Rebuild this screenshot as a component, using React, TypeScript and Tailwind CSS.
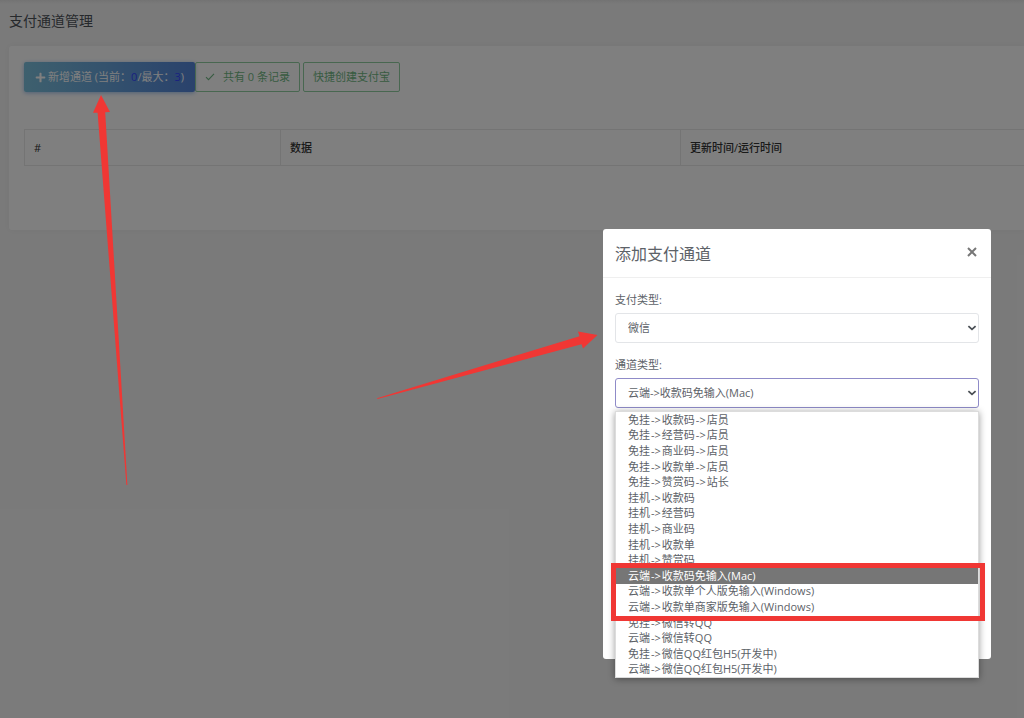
import { Fragment, useState } from "react";
import { FaPlus } from "react-icons/fa";

const channels = [
  "免挂->收款码->店员",
  "免挂->经营码->店员",
  "免挂->商业码->店员",
  "免挂->收款单->店员",
  "免挂->赞赏码->站长",
  "挂机->收款码",
  "挂机->经营码",
  "挂机->商业码",
  "挂机->收款单",
  "挂机->赞赏码",
  "云端->收款码免输入(Mac)",
  "云端->收款单个人版免输入(Windows)",
  "云端->收款单商家版免输入(Windows)",
  "免挂->微信转QQ",
  "云端->微信转QQ",
  "免挂->微信QQ红包H5(开发中)",
  "云端->微信QQ红包H5(开发中)",
];

function Chevron() {
  return (
    <svg viewBox="0 0 10 6" className="pointer-events-none absolute top-3 right-[2px] h-[6px] w-[10px]" fill="none" stroke="#4a4f55" strokeWidth="1.8">
      <path d="M1.4 1.2 5 4.4 8.6 1.2" />
    </svg>
  );
}

function ChannelName({ name }: { name: string }) {
  return (
    <>
      {name.split("->").map((part, i) => (
        <Fragment key={i}>
          {i > 0 && <span className="px-px">-&gt;</span>}
          {part}
        </Fragment>
      ))}
    </>
  );
}

function Page() {
  return (
    <main className="min-h-screen overflow-hidden bg-[#f5f5f5]">
      <div className="h-1 bg-gradient-to-b from-[#e6e6e6] to-[#f5f5f5]" />
      <h1 className="px-[9px] pt-[7px] text-sm leading-5 text-[#4d5259]">支付通道管理</h1>
      <section className="mt-[15px] ml-[9px] h-[184px] rounded-l-[3px] bg-white pt-4 pl-[15px] shadow-[0_0_8px_rgba(0,0,0,0.05)]">
        <div className="flex h-[30px]">
          <button className="flex w-[171px] items-center justify-center gap-[2px] rounded-[2px] bg-gradient-to-r from-[#7cc0dc] to-[#5484d8] whitespace-nowrap text-white shadow-[0_1px_4px_rgba(60,130,220,0.5)]">
            <FaPlus className="size-[11px]" />
            <span>
              新增通道 (当前：<span className="text-[#3344ff]">0</span>/最大：<span className="text-[#3344ff]">3</span>)
            </span>
          </button>
          <button className="flex w-[105px] items-center justify-center gap-2 rounded-[2px] border border-[#90cfa0] text-[#70b784]">
            <svg viewBox="0 0 10 8" className="h-2 w-[10px]" fill="none" stroke="currentColor" strokeWidth="1.1">
              <path d="M1 4.2 3.5 6.6 9 .9" />
            </svg>
            共有 0 条记录
          </button>
          <button className="ml-[3px] w-[97px] rounded-[2px] border border-[#90cfa0] text-[#70b784]">快捷创建支付宝</button>
        </div>
        <table className="mt-[37px] w-full table-fixed border-collapse text-left text-[#333]">
          <thead>
            <tr className="h-9">
              <th className="w-64 border border-[#e9e9e9] px-[9px] pt-[2px] font-medium">#</th>
              <th className="w-[400px] border border-[#e9e9e9] px-[9px] pt-[2px] font-medium">数据</th>
              <th className="border border-r-0 border-[#e9e9e9] px-[9px] pt-[2px] font-medium">更新时间/运行时间</th>
            </tr>
          </thead>
        </table>
      </section>
    </main>
  );
}

function AddChannelDialog() {
  const [payType, setPayType] = useState("微信");
  const [channel, setChannel] = useState(channels[10]);
  return (
    <div role="dialog" aria-labelledby="dialog-title" className="h-[430px] w-[388px] rounded-[3px] bg-white text-[#5d6268]">
      <header className="flex h-[49px] items-center justify-between border-b border-[#efefef] px-3 pt-[2px]">
        <h2 id="dialog-title" className="text-base text-[#5d6268]">添加支付通道</h2>
        <button aria-label="关闭" className="mr-[2px] mb-1">
          <svg viewBox="0 0 10 10" className="size-[10px]" stroke="#777" strokeWidth="2">
            <path d="M1 1 9 9M9 1 1 9" />
          </svg>
        </button>
      </header>
      <div className="flex flex-col px-3 pt-[14px]">
        <label htmlFor="pay-type" className="leading-4">支付类型:</label>
        <div className="relative mt-[5px]">
          <select id="pay-type" value={payType} onChange={(e) => setPayType(e.target.value)} className="block h-[30px] w-full appearance-none rounded-[3px] border border-[#e3e5e8] bg-white px-3 pt-px outline-none">
            <option>微信</option>
          </select>
          <Chevron />
        </div>
        <label htmlFor="channel-type" className="mt-[14px] leading-4">通道类型:</label>
        <div className="relative mt-[5px]">
          <select id="channel-type" value={channel} onChange={(e) => setChannel(e.target.value)} className="block h-[30px] w-full appearance-none rounded-[3px] border border-[#8f8bc8] bg-white px-3 pt-px outline-none">
            {channels.map((name) => (
              <option key={name}>{name}</option>
            ))}
          </select>
          <Chevron />
          <div className="absolute inset-x-0 top-[33px]">
            <ul role="listbox" aria-label="通道类型" className="flex h-[267px] flex-col border border-[#dcdcdc] bg-white text-[#5d6268] shadow-[0_1px_7px_rgba(0,0,0,0.4)]">
              {channels.map((name) => (
                <li
                  key={name}
                  role="option"
                  aria-selected={name === channel}
                  onClick={() => setChannel(name)}
                  className="flex min-h-0 flex-1 items-center px-3 leading-4 whitespace-nowrap aria-selected:bg-[#767676] aria-selected:text-white"
                >
                  <ChannelName name={name} />
                </li>
              ))}
            </ul>
            <div className="pointer-events-none absolute top-[152px] -right-[6px] -left-1 h-[58px] border-[5px] border-[#f03734]" />
          </div>
        </div>
      </div>
    </div>
  );
}

export default function App() {
  return (
    <div className="relative font-['Open_Sans','Noto_Sans_CJK_SC',sans-serif] text-[11px]">
      <Page />
      <div className="absolute inset-0 flex items-start justify-end bg-black/50 pt-[229px] pr-[33px]">
        <AddChannelDialog />
      </div>
      <svg viewBox="0 0 36 392" className="pointer-events-none absolute top-[94px] left-[92px] h-[392px] w-9" fill="#f03734">
        <path d="M9 1 18 18 13.2 18.3 35.4 391 34.4 391 5.6 18.7 1 18.8Z" />
      </svg>
      <svg viewBox="0 0 222 70" className="pointer-events-none absolute top-[330px] left-[376px] h-[70px] w-[222px]" fill="#f03734">
        <path d="M221.5 5 207 18.5 205.5 14.2 1.5 69 1 68.2 203.5 6.2 202 1.5Z" />
      </svg>
    </div>
  );
}
